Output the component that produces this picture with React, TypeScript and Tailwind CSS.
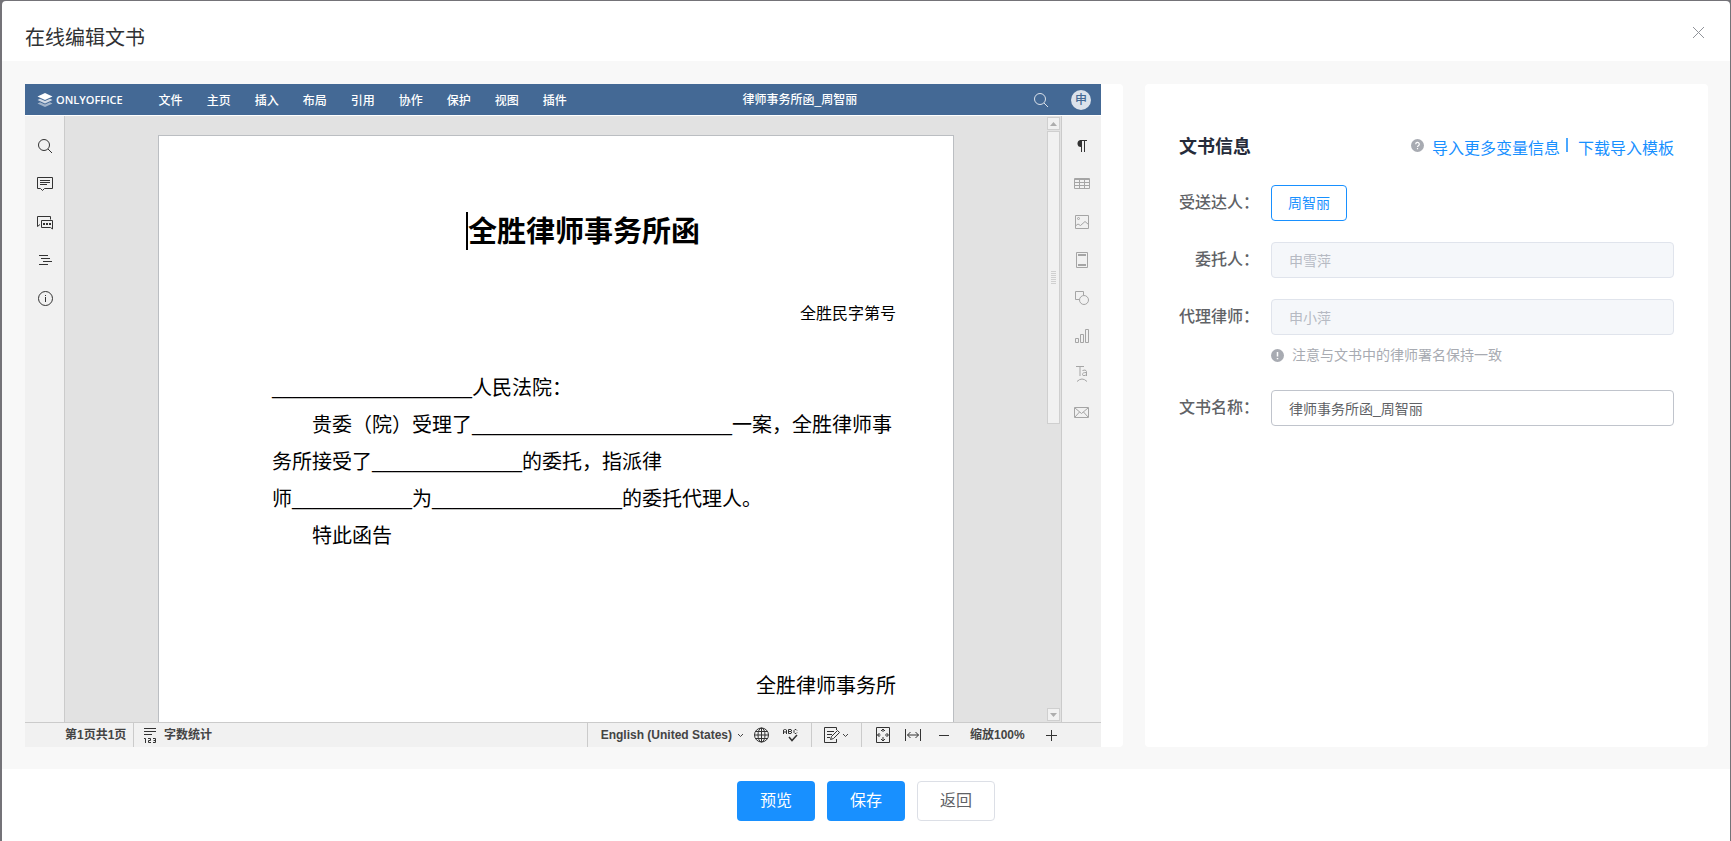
import type { ReactNode } from "react";

const uiFont = "font-['Liberation_Sans','Noto_Sans_CJK_SC',sans-serif]";
const docFont = "font-['Noto_Sans_CJK_SC',sans-serif]";

const menuTabs = ["文件", "主页", "插入", "布局", "引用", "协作", "保护", "视图", "插件"];

function Icon({ children, className = "" }: { children: ReactNode; className?: string }) {
  return (
    <svg
      viewBox="0 0 20 20"
      aria-hidden="true"
      fill="none"
      stroke="currentColor"
      strokeWidth="1"
      className={`size-5 shrink-0 ${className}`}
    >
      {children}
    </svg>
  );
}

const SearchIcon = () => (
  <Icon>
    <circle cx="9" cy="9" r="5.5" />
    <path d="M13 13l4 4" />
  </Icon>
);

const leftTools: { label: string; icon: ReactNode }[] = [
  { label: "查找", icon: <SearchIcon /> },
  {
    label: "批注",
    icon: (
      <Icon>
        <path d="M2.5 3.5h15v11h-8l-2 2-2-2h-3z" />
        <path d="M5 6.5h10M5 8.5h10M5 10.5h7" />
      </Icon>
    ),
  },
  {
    label: "聊天",
    icon: (
      <Icon>
        <path d="M5 12.5l-2.5 2V4.5h13v3" />
        <path d="M6.5 8.5h11v8.5l-2-1.5h-9z" />
        <path d="M8 12h2M11 12h2M14 12h2" strokeWidth="2" />
      </Icon>
    ),
  },
  {
    label: "标题",
    icon: (
      <Icon>
        <path d="M4 5.5h9M6 8.5h9M8 11.5h9M4 14.5h9" />
      </Icon>
    ),
  },
  {
    label: "关于",
    icon: (
      <Icon>
        <circle cx="10.5" cy="10.5" r="7" />
        <path d="M10.5 9v5M10.5 7v1" />
      </Icon>
    ),
  },
];

const rightTools: { label: string; icon: ReactNode }[] = [
  {
    label: "段落设置",
    icon: (
      <Icon className="text-[#333]">
        <path d="M9 4a3.5 3.5 0 0 0 0 7z" fill="currentColor" stroke="none" />
        <path d="M8 4.5h7M9.5 4v12M12.5 4v12" />
      </Icon>
    ),
  },
  {
    label: "表格设置",
    icon: (
      <Icon>
        <path d="M2.5 4.5h15v10h-15zM2 5.5h16M2 8.5h16M2 11.5h16M7.5 6v9M12.5 6v9" />
      </Icon>
    ),
  },
  {
    label: "图片设置",
    icon: (
      <Icon>
        <path d="M3.500 3.5h13v13h-13z" />
        <circle cx="6.5" cy="6.5" r="1" />
        <path d="M4 13.500l2-1.500 2.500 1.500L13 9.500l3.500 3" />
      </Icon>
    ),
  },
  {
    label: "页眉页脚设置",
    icon: (
      <Icon>
        <path d="M4.500 2.500h11v15h-11z" />
        <path d="M6 5h8M6 15h8" strokeWidth="2" />
      </Icon>
    ),
  },
  {
    label: "形状设置",
    icon: (
      <Icon>
        <path d="M7 11.500H3.500v-8h8V7" />
        <circle cx="12" cy="12" r="4.500" />
      </Icon>
    ),
  },
  {
    label: "图表设置",
    icon: (
      <Icon>
        <path d="M3.500 12.500h3v4h-3zM8.500 8.500h3v8h-3zM13.500 3.500h3v13h-3z" />
      </Icon>
    ),
  },
  {
    label: "艺术字设置",
    icon: (
      <Icon>
        <path d="M4 2.500h8M8 2.500V12" />
        <path d="M10.500 6.500q3.500-1.500 4 1V12M14.500 8.500c-3 0-4 .5-4 2s2.500 1.500 4 0" />
        <path d="M5 17.500q5-5 10 0" />
      </Icon>
    ),
  },
  {
    label: "邮件合并设置",
    icon: (
      <Icon>
        <path d="M2.500 5.500h14v10h-14zM3 6l6.500 5.500L16 6M3 15l4.500-5M16 15l-4.500-5" />
      </Icon>
    ),
  },
];

function ToolRail({ tools, className }: { tools: typeof leftTools; className: string }) {
  return (
    <div className={`flex w-10 shrink-0 flex-col items-center bg-[#f1f1f1] pt-[11px] ${className}`}>
      {tools.map((tool) => (
        <button key={tool.label} type="button" aria-label={tool.label} className="flex h-[38px] w-full items-center justify-center">
          {tool.icon}
        </button>
      ))}
    </div>
  );
}

/* A run of underscores: a place in the letter that is filled in later. */
const Blank = ({ length }: { length: number }) => (
  <span className="font-['Liberation_Serif',serif] leading-none">{"_".repeat(length)}</span>
);

function LetterPage() {
  return (
    <article
      className={`h-[1123px] w-[796px] shrink-0 border border-[#bbbec2] bg-white pt-[76px] pr-[57px] pl-[113px] text-black ${docFont}`}
    >
      <h2 className="flex items-center justify-center text-[29px] leading-[34px] font-bold">
        <span className="relative">
          <span className="absolute top-0 -left-0.5 h-[38px] w-0.5 bg-black" />
          全胜律师事务所函
        </span>
      </h2>
      <p className="mt-[54px] text-right text-base leading-6">全胜民字第号</p>
      <div className="mt-11 text-[20px] leading-[37px] whitespace-nowrap">
        <p>
          <Blank length={20} />
          人民法院：
        </p>
        <p className="pl-10">
          贵委（院）受理了
          <Blank length={26} />
          一案，全胜律师事
        </p>
        <p>
          务所接受了
          <Blank length={15} />
          的委托，指派律
        </p>
        <p>
          师
          <Blank length={12} />为<Blank length={19} />
          的委托代理人。
        </p>
        <p className="pl-10">特此函告</p>
        <p className="mt-[113px] text-right">全胜律师事务所</p>
      </div>
    </article>
  );
}

function ScrollBar() {
  return (
    <div className="flex w-[14px] shrink-0 flex-col pt-px pb-px">
      <button type="button" aria-label="向上滚动" className="flex size-[13px] items-center justify-center border border-[#cfcfcf] bg-[#f1f1f1]">
        <svg viewBox="0 0 7 4" className="h-1 w-[7px] fill-[#adadad]"><path d="M0 4L3.500 0 7 4z" /></svg>
      </button>
      <div className="mt-px flex h-[293px] w-[13px] flex-col items-center justify-center gap-px border border-[#cfcfcf] bg-[#f1f1f1]">
        {[0, 1, 2, 3, 4, 5, 6].map((n) => (
          <span key={n} className="h-px w-[5px] bg-[#cfcfcf]" />
        ))}
      </div>
      <button type="button" aria-label="向下滚动" className="mt-auto flex size-[13px] items-center justify-center border border-[#cfcfcf] bg-[#f1f1f1]">
        <svg viewBox="0 0 7 4" className="h-1 w-[7px] fill-[#adadad]"><path d="M0 0h7L3.500 4z" /></svg>
      </button>
    </div>
  );
}

const Caret = () => (
  <svg viewBox="0 0 7 5" fill="none" stroke="currentColor" aria-hidden="true" className="h-[5px] w-[7px]">
    <path d="M1 1l2.500 2.500L6 1" />
  </svg>
);

function StatusBar() {
  return (
    <div className="flex h-[25px] shrink-0 items-stretch border-t border-[#cbcbcb] bg-[#f1f1f1] pl-10 text-xs font-bold text-[#444] *:flex *:items-center">
      <button type="button" className="w-[69px] border-r border-[#cbcbcb]">第1页共1页</button>
      <button type="button" className="pl-1.5">
        <Icon className="text-[#333]">
          <path d="M4 3.500h12M4 6.500h12M4 9.500h8" />
          <path d="M4 13.500h1.500V18M8 13.500h2.500v2h-2v2H11M13 13.500h2.500v4H13M13.500 15.500h2" />
        </Icon>
        <span className="pl-1">字数统计</span>
      </button>
      <div className="ml-auto border-l border-[#cbcbcb] pr-[11px] pl-[13px]">
        <button type="button" className="flex items-center gap-[5px]">
          English (United States) <Caret />
        </button>
        <button type="button" aria-label="文档语言" className="ml-2">
          <Icon className="text-[#333]">
            <circle cx="9.500" cy="10" r="7" />
            <ellipse cx="9.500" cy="10" rx="3.500" ry="7" />
            <path d="M9.500 3v14M2.500 10h14M3.500 6.500h12M3.500 13.500h12" />
          </Icon>
        </button>
        <button type="button" aria-label="拼写检查" className="ml-2">
          <Icon className="text-[#333]">
            <path d="M3.500 9V5l1-.5h1l1 .5v4M3.500 7h3M8.500 8.500v-4H11l.5.5v1l-.5.5H9M11 6.500l.5.5v1l-.5.5H8.500M17 5.500l-1-1h-1l-1 1v2l1 1h1l1-1" />
            <path d="M9 12l3 3.500 5-5.500" strokeWidth="1.500" />
          </Icon>
        </button>
      </div>
      <button type="button" aria-label="修订" className="w-[50px] border-l border-[#cbcbcb] pl-[10px]">
        <Icon className="text-[#333]">
          <path d="M14.500 5V2.500h-12v15h12V14M5 6.500h7M5 9.500h5M5 12.500h3" />
          <path d="M8.500 14.500l1-3 6-6 2 2-6 6z" />
        </Icon>
        <Caret />
      </button>
      <div className="w-[240px] border-l border-[#cbcbcb] pl-[11px]">
        <button type="button" aria-label="适合页面">
          <Icon className="text-[#333]">
            <path d="M3.500 2.500h13v15h-13z" />
            <path d="M10 4v4M10 12v4M4.500 10H8M12 10h3.500" strokeDasharray="3 1" />
            <path d="M8 6l2-2 2 2M8 14l2 2 2-2M6.500 8l-2 2 2 2M13.500 8l2 2-2 2" />
          </Icon>
        </button>
        <button type="button" aria-label="适合宽度" className="ml-2.5">
          <Icon className="text-[#333]">
            <path d="M2.500 4v12M17.500 4v12M4.500 10h11M7.500 7l-3 3 3 3M12.500 7l3 3-3 3" />
          </Icon>
        </button>
        <button type="button" aria-label="缩小" className="ml-[11px]">
          <Icon className="text-[#333]"><path d="M5 10.500h10" /></Icon>
        </button>
        <span className="ml-4">缩放100%</span>
        <button type="button" aria-label="放大" className="ml-4">
          <Icon className="text-[#333]"><path d="M5 10.500h11M10.500 5v11" /></Icon>
        </button>
      </div>
    </div>
  );
}

function Editor() {
  return (
    <section className="flex min-w-0 flex-1 flex-col">
      <div className="flex h-[31px] shrink-0 items-center bg-[#446995] pt-0.5 pr-2.5 pb-px pl-3 text-xs text-white">
        <svg viewBox="0 0 16 15" className="mr-[3px] h-[15px] w-4 fill-white" aria-hidden="true">
          <path d="M8 0l7.500 3.500L8 7 .500 3.500z" />
          <path d="M.500 7l2.500-1.200L8 8.100l5-2.300L15.500 7 8 10.500z" opacity=".75" />
          <path d="M.500 10.500l2.500-1.200 5 2.300 5-2.300 2.500 1.200L8 14z" opacity=".5" />
        </svg>
        <span className="font-['Open_Sans',sans-serif] text-[11px] font-semibold">ONLYOFFICE</span>
        <nav className="ml-6 flex">
          {menuTabs.map((tab) => (
            <button key={tab} type="button" className="h-7 px-3 pt-px font-medium">{tab}</button>
          ))}
        </nav>
        <span className="flex-1 pr-2.5 text-center font-medium">律师事务所函_周智丽</span>
        <button type="button" aria-label="查找" className="text-[#dbe2eb]"><SearchIcon /></button>
        <span className="ml-5 flex size-5 items-center justify-center rounded-full bg-[#dbe2eb] text-xs font-medium text-[#446995]">
          申
        </span>
      </div>
      <div className="mt-px flex min-h-0 flex-1">
        <ToolRail tools={leftTools} className="border-r border-[#cbcbcb] text-[#333]" />
        <div className="flex min-w-0 flex-1 overflow-hidden bg-[#e2e2e2]">
          <div className="flex min-w-0 flex-1 justify-center overflow-hidden pt-[19px]">
            <LetterPage />
          </div>
          <ScrollBar />
        </div>
        <ToolRail tools={rightTools} className="border-l border-[#cbcbcb] text-[#a5a5a5]" />
      </div>
      <StatusBar />
    </section>
  );
}

function BadgeIcon({ mark, className = "" }: { mark: "?" | "!"; className?: string }) {
  return (
    <svg viewBox="0 0 13 13" aria-hidden="true" className={`size-[13px] shrink-0 ${className}`}>
      <circle cx="6.500" cy="6.500" r="6.500" fill="#a8abb2" />
      {mark === "!" ? (
        <path d="M6.500 3v4.500M6.500 9v1.300" stroke="#fff" strokeWidth="1.500" />
      ) : (
        <path d="M4.700 5.200a1.800 1.800 0 1 1 2.700 1.500q-.9.500-.9 1.200M6.500 9v1.200" fill="none" stroke="#fff" strokeWidth="1.200" />
      )}
    </svg>
  );
}

function Field({ label, htmlFor, children }: { label: string; htmlFor: string; children: ReactNode }) {
  return (
    <div className="flex items-start">
      <label htmlFor={htmlFor} className="w-20 shrink-0 text-right text-base leading-9 font-medium whitespace-nowrap text-[#606266]">
        {label}：
      </label>
      <div className="ml-3 min-w-0 flex-1">{children}</div>
    </div>
  );
}

const inputBase = "block h-9 w-full rounded border px-[17px] text-sm";
const disabledInput = `${inputBase} border-[#e0e4ec] bg-[#f5f7fa] text-[#b6bac3]`;

function InfoPanel() {
  return (
    <section className="min-w-0 rounded-sm bg-white px-[34px] pt-[49px]">
      <div className="flex items-center">
        <h2 className="text-lg leading-6 font-bold text-[#252b3a]">文书信息</h2>
        <div className="ml-auto flex items-start text-base leading-6 text-[#1890ff]">
          <BadgeIcon mark="?" className="mt-1.5" />
          <a href="#import" className="mt-1 ml-2">导入更多变量信息</a>
          <span className="mt-[5px] ml-1.5 h-3.5 w-0.5 bg-[#4ba8ff]" />
          <a href="#template" className="mt-1 ml-2.5">下载导入模板</a>
        </div>
      </div>
      <form className="mt-6 flex flex-col gap-[21px]">
        <Field label="受送达人" htmlFor="recipient">
          <button id="recipient" type="button" className="block h-9 rounded border border-[#1890ff] px-4 text-sm text-[#1890ff]">
            周智丽
          </button>
        </Field>
        <Field label="委托人" htmlFor="client">
          <input id="client" disabled defaultValue="申雪萍" className={disabledInput} />
        </Field>
        <Field label="代理律师" htmlFor="lawyer">
          <input id="lawyer" disabled defaultValue="申小萍" className={disabledInput} />
          <p className="mt-2 flex items-center gap-2 text-sm leading-6 text-[#a8abb2]">
            <BadgeIcon mark="!" />
            注意与文书中的律师署名保持一致
          </p>
        </Field>
        <div className="pt-0.5">
          <Field label="文书名称" htmlFor="docname">
            <input id="docname" defaultValue="律师事务所函_周智丽" className={`${inputBase} border-[#c0c4cc] bg-white text-[#606266]`} />
          </Field>
        </div>
      </form>
    </section>
  );
}

export default function App() {
  return (
    <div className={`flex h-screen bg-[#747378] pt-px pr-px pl-0.5 ${uiFont}`}>
      <div role="dialog" aria-labelledby="dialog-title" className="flex min-w-0 flex-1 flex-col rounded-t-sm bg-white">
        <header className="flex h-[60px] shrink-0 items-center justify-between pr-[25px] pl-[23px]">
          <h1 id="dialog-title" className="pt-3.5 text-xl leading-7 text-[#303133]">在线编辑文书</h1>
          <button type="button" aria-label="关闭" className="pt-0.5 text-[#909399]">
            <svg viewBox="0 0 13 13" fill="none" stroke="currentColor" className="size-[13px]">
              <path d="M1 1l11 11M12 1L1 12" />
            </svg>
          </button>
        </header>
        <main className="grid min-h-0 flex-1 grid-cols-[1098fr_563fr] grid-rows-[minmax(0,1fr)] gap-[22px] bg-[#f8f8f8] pt-[23px] pr-[22px] pb-[22px] pl-[23px]">
          <div className="flex min-w-0 rounded-sm bg-white pr-[22px]">
            <Editor />
          </div>
          <InfoPanel />
        </main>
        <footer className="flex shrink-0 justify-center gap-3 pt-3 pb-5">
          <button type="button" className="h-10 w-[78px] rounded bg-[#1890ff] text-base text-white">预览</button>
          <button type="button" className="h-10 w-[78px] rounded bg-[#1890ff] text-base text-white">保存</button>
          <button type="button" className="h-10 w-[78px] rounded border border-[#dcdfe6] text-base text-[#606266]">返回</button>
        </footer>
      </div>
    </div>
  );
}
